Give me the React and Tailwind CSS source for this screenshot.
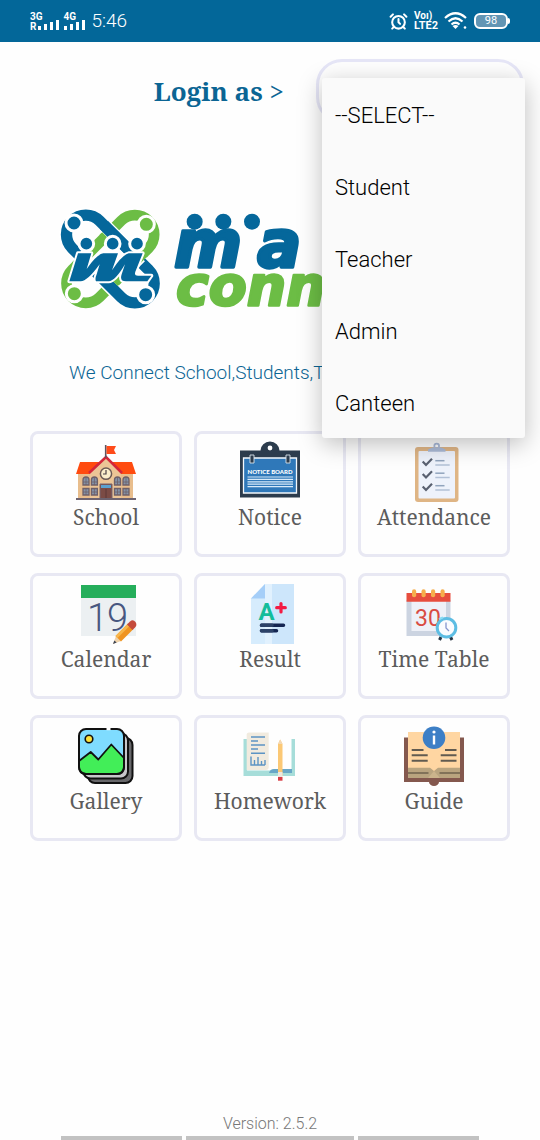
import { useState } from "react";
import { AlarmClock } from "lucide-react";

const ROLES = ["--SELECT--", "Student", "Teacher", "Admin", "Canteen"];

const SERIF = "font-['Noto_Serif','DejaVu_Serif',serif]";

function Svg({ children }) {
  return (
    <svg viewBox="0 0 60 60" className="size-[60px] overflow-visible" aria-hidden="true">
      {children}
    </svg>
  );
}

function SchoolIcon() {
  return (
    <Svg>
      <path d="M4 19H56L60 31H0Z" fill="#ff4b0f" />
      <path d="M2 31H57V55H2Z" fill="#e8bd8c" />
      <path d="M30 15L45 30V55H14V30Z" fill="#ecc596" />
      <path d="M13 30L30 14L46 30" fill="none" stroke="#d3263a" strokeWidth="2.6" />
      <path d="M29.7 2V15" stroke="#5d5560" strokeWidth="1.6" />
      <path d="M30.5 3H40L38 7L40 11H30.5Z" fill="#ff4b1a" />
      <circle cx="30" cy="30.7" r="5.6" fill="#fbeecb" stroke="#6b5a55" strokeWidth="1.5" />
      <path d="M30 27V31H27" fill="none" stroke="#4c4347" strokeWidth="1.2" />
      {[7, 15.4, 38.5, 47].map((x) => (
        <g key={x} fill="#8493a8" stroke="#6f6068" strokeWidth="1.3">
          <path d={`M${x} 42V37a3 3 0 0 1 6 0V42Z`} />
          <path d={`M${x} 45.5h6v6.500h-6Z`} />
          <path d={`M${x + 3} 34V42M${x + 3} 45.500V52M${x} 39H${x + 6}M${x} 49H${x + 6}`} strokeWidth=".8" />
        </g>
      ))}
      <path d="M24 41H36V56H24Z" fill="#7b4b45" stroke="#776570" />
      <path d="M25 42H35V45H25Z" fill="#5ba1d0" />
      <path d="M30 46V56" stroke="#553436" strokeWidth=".8" />
      <path d="M0 55H60V57H0Z" fill="#6d6370" />
    </Svg>
  );
}

function NoticeIcon() {
  return (
    <Svg>
      <path d="M0 7.500H20.500A9.500 9 0 0 1 39.500 7.500H60V54.500H0Z" fill="#2c3c4d" />
      <circle cx="30" cy="5" r="2.4" fill="#fff" />
      <path d="M3.500 15H56.500V50H3.500Z" fill="#2f78b9" stroke="#f3f8fc" strokeWidth="1.3" />
      <path d="M10 12H14V20H10ZM46 12H50V20H46Z" fill="#2c3c4d" stroke="#d9e2ea" strokeWidth=".9" />
      <text x="30" y="30.500" textAnchor="middle" fontSize="6" fontWeight="900" fill="#fff" fontFamily="Lato, sans-serif">
        NOTICE BOARD
      </text>
      <path d="M7.500 34H53M7.500 36.400H53M7.500 38.800H53M7.500 41.200H53M7.500 43.600H53" stroke="#d8eafa" strokeWidth="1.2" />
    </Svg>
  );
}

function AttendanceIcon() {
  return (
    <Svg>
      <rect x="11" y="4" width="43.500" height="55" rx="3" fill="#dfb585" />
      <rect x="14.500" y="8" width="36.500" height="47.500" rx="1" fill="#eef2fb" />
      <circle cx="32.700" cy="3" r="2.400" fill="none" stroke="#a9b9d8" strokeWidth="1.700" />
      <path d="M28 4.500H37.500L41.500 6.500V8.700H24V6.500Z" fill="#abbad6" />
      {[0, 12.5, 25].map((y) => (
        <g key={y} transform={`translate(0 ${y})`} fill="none">
          <path d="M18.700 18.500L22 22L28 15.700" stroke="#596070" strokeWidth="2.200" />
          <path d="M31.300 17.700H40.500" stroke="#91a4bd" strokeWidth="1.500" />
          <path d="M31.300 22H45.700" stroke="#b2c0d6" strokeWidth="1.500" />
        </g>
      ))}
    </Svg>
  );
}

function CalendarIcon() {
  return (
    <Svg>
      <path d="M5 13H60V51H5Z" fill="#ecf0f2" />
      <path d="M5 0H60V13H5Z" fill="#25ae5b" />
      <text y="45.500" fontSize="38" fontWeight="300" fill="#485780" fontFamily="Roboto, sans-serif">
        <tspan x="11">1</tspan>
        <tspan x="31">9</tspan>
      </text>
      <path d="M37 59L40 51L45 56Z" fill="#efd2aa" />
      <path d="M37 59L38.300 55.500L40.700 57.500Z" fill="#3c4454" />
      <path d="M39.500 51L52 38.500L57.500 44L45 56.500Z" fill="#ef9422" />
      <path d="M39.500 51L52 38.500L54 40.500L41.500 53Z" fill="#f8b64b" />
      <path d="M51 39.500L54 36.500Q57 34 59.500 37Q61.500 40 59 42.500L56.500 45Z" fill="#c44a3c" />
    </Svg>
  );
}

function ResultIcon() {
  return (
    <Svg>
      <path d="M25 -1H54V59H11V13.500Z" fill="#d6ecfd" />
      <path d="M25 -1H32V59H25Z" fill="#e1f1fe" />
      <path d="M32 -1H54V59H32Z" fill="#cde6fb" />
      <path d="M25 -1V13.500H11Z" fill="#a5cef8" />
      <text x="18.500" y="34.500" fontSize="24" fontWeight="700" fill="#13bd9b" fontFamily="Roboto, sans-serif">
        A
      </text>
      <path d="M41 18.500V27M36.700 22.700H45.300" stroke="#f31b43" strokeWidth="3.200" strokeLinecap="round" />
      <path d="M21.500 40.300H43.500M21.500 45.700H36.500" stroke="#142552" strokeWidth="3.500" strokeLinecap="round" />
      <path d="M21.500 40.300H32M21.500 45.700H32" stroke="#2c4268" strokeWidth="3.500" strokeLinecap="round" />
    </Svg>
  );
}

function TimeTableIcon() {
  return (
    <Svg>
      <path d="M2.500 15H46.500V51H2.500Z" fill="#ccd4e1" />
      <path d="M7.500 16H42V46H7.500Z" fill="#eef1f8" />
      <path d="M2.500 8H46.500V16.700H2.500Z" fill="#e74d3e" />
      {[10, 19.5, 29, 38.5].map((x) => (
        <rect key={x} x={x - 2} y="4.300" width="4.200" height="8" rx="2.100" fill="#f6ae4c" />
      ))}
      <text x="24" y="41" textAnchor="middle" fontSize="23" fill="#d94b42" fontFamily="Roboto, sans-serif">
        30
      </text>
      <path d="M37 52L35.500 55M46.500 52L48 55" stroke="#263544" strokeWidth="3" />
      <circle cx="42.500" cy="42.700" r="9.300" fill="#fafcff" stroke="#5dbde3" strokeWidth="3" />
      <path d="M42 37.500V43L45 46" fill="none" stroke="#8696ce" strokeWidth="1.300" />
      <path d="M35 34.500A9.500 9.500 0 0 1 39 32.500" fill="none" stroke="#8adcf4" strokeWidth="2" />
    </Svg>
  );
}

function GalleryIcon() {
  return (
    <Svg>
      <rect x="12" y="11" width="44.500" height="45" rx="7" fill="#68686b" stroke="#111" strokeWidth="2" />
      <rect x="7.500" y="6.500" width="44.500" height="45" rx="7" fill="#c7c7ca" stroke="#111" strokeWidth="2" />
      <rect x="3" y="2" width="45" height="45" rx="7" fill="#7fdcff" />
      <path d="M3 34L14.700 25L22.300 32.500L35.300 17.500L48 31V40Q48 47 41 47H10Q3 47 3 40Z" fill="#42ee58" stroke="#111" strokeWidth="1.800" strokeLinejoin="round" />
      <rect x="3" y="2" width="45" height="45" rx="7" fill="none" stroke="#111" strokeWidth="2" />
      <path d="M30.500 2H34.500" stroke="#fff" strokeWidth="2.400" />
      <circle cx="13" cy="12" r="3.800" fill="#ffe13a" stroke="#111" strokeWidth="1.600" />
    </Svg>
  );
}

function HomeworkIcon() {
  return (
    <Svg>
      <path d="M3.500 12H7V43.500H51.500V12H55V49H3.500Z" fill="#a6ddd9" />
      <path d="M29 46Q30 42 34 42H52V46Z" fill="#68a7c7" />
      <path d="M6.700 7Q7 5.500 9 5.500H28.700V41Q28 43 26 43H6.700Z" fill="#f1ebdf" />
      <path d="M11 10H25M11 14H18M11 18H25M11 22H18M11 26.300H25M11 29.500V38H25M14.500 38V33M18 38V30M21.500 38V34M25 38V33" fill="none" stroke="#5c94c4" strokeWidth="1.400" />
      <path d="M38 17L40.200 12.500L42.500 17V49H38Z" fill="#fbc875" />
      <path d="M38 17L40.200 12.500L42.500 17Z" fill="#f3d8b3" />
      <path d="M38 45H42.500V50H38Z" fill="#ece7df" />
      <path d="M38 50H42.500V53.700H38Z" fill="#d83f47" />
    </Svg>
  );
}

function GuideIcon() {
  return (
    <Svg>
      <path d="M0 10.500H60V55H35A5 4 0 0 1 25 55H0Z" fill="#84584e" />
      <path d="M4 5H56V51H4Z" fill="#ffd6a2" />
      <path d="M4 40.700H26L30 44L34 40.700H56V51H4Z" fill="#b9a47f" />
      <path d="M24 51L30 44L36 51Z" fill="#cbb48c" />
      <path d="M7.700 23H19.500M7.700 28.300H23.700M7.700 33.700H23.700M41 23H52.500M36.700 28.300H52.500M36.700 33.700H52.500" stroke="#615b50" strokeWidth="2" />
      <path d="M4 46H24.500M35.500 46H56" stroke="#817259" strokeWidth="2" />
      <circle cx="30" cy="10.700" r="11.300" fill="#3d7fc6" />
      <circle cx="30" cy="5" r="1.600" fill="#fff" />
      <path d="M30 8.500V17.500" stroke="#fff" strokeWidth="2.400" />
    </Svg>
  );
}

const TILES = [
  ["School", SchoolIcon],
  ["Notice", NoticeIcon],
  ["Attendance", AttendanceIcon],
  ["Calendar", CalendarIcon],
  ["Result", ResultIcon],
  ["Time Table", TimeTableIcon],
  ["Gallery", GalleryIcon],
  ["Homework", HomeworkIcon],
  ["Guide", GuideIcon],
];

const BLUE = "#05679b";
const GREEN = "#6cbd45";

/* Three people standing side by side, each reaching an arm to the next. */
const FIGURES =
  "M84 175H124L110 222Q140 178 160 175H204L186 226Q216 180 236 175H278L256 230Q252 242 264 242H304L292 259H228Q208 259 215 238L225 208Q196 258 176 259H138Q134 252 140 238L149 208Q112 259 92 259H58Z";

function Logo() {
  return (
    <svg viewBox="0 0 840 375" className="h-[125px] w-[280px]" role="img" aria-label="School logo">
      <g fill="none">
        <rect x="19" y="134" width="324" height="116" rx="58" transform="rotate(-45 181 192)" stroke={GREEN} strokeWidth="32" />
        <rect x="19" y="134" width="324" height="116" rx="58" transform="rotate(45 181 192)" stroke="#fff" strokeWidth="44" />
        <rect x="19" y="134" width="324" height="116" rx="58" transform="rotate(45 181 192)" stroke={BLUE} strokeWidth="34" />
        <path d="M94 197L160 131M204 250L270 184" stroke="#fff" strokeWidth="42" />
        <path d="M78 213L168 123M192 262L282 172" stroke={GREEN} strokeWidth="32" />
        <path d="M162 90L238 166" stroke={BLUE} strokeWidth="34" />
      </g>
      <g stroke="#fff" strokeWidth="9">
        <circle cx="72" cy="84" r="24" fill={BLUE} />
        <circle cx="289" cy="88" r="24" fill={GREEN} />
        <circle cx="73" cy="296" r="24" fill={GREEN} />
        <circle cx="287" cy="299" r="24" fill={BLUE} />
        <circle cx="109" cy="146" r="22" fill={BLUE} />
        <circle cx="188" cy="146" r="22" fill={BLUE} />
        <circle cx="261" cy="146" r="22" fill={BLUE} />
        <path d={FIGURES} fill={BLUE} strokeWidth="12" paintOrder="stroke" strokeLinejoin="round" />
      </g>
      <g fontFamily="DejaVu Sans, sans-serif" fontWeight="700" fontStyle="italic" strokeLinejoin="round">
        <text x="372" y="217" fontSize="196" fill={BLUE} stroke={BLUE} strokeWidth="10">
          <tspan x="372">m</tspan>
          <tspan x="622">a</tspan>
        </text>
        <text x="378" y="329" fontSize="166" fill={GREEN} stroke={GREEN} strokeWidth="8">
          conn
        </text>
      </g>
      <g fill={BLUE}>
        <circle cx="434" cy="80" r="24" />
        <circle cx="520" cy="80" r="24" />
        <circle cx="606" cy="80" r="24" />
      </g>
    </svg>
  );
}

function Signal({ top, prefix }) {
  return (
    <div className="flex flex-col text-[10px] leading-[9px] font-bold">
      <span>{top}</span>
      <div className="flex items-end gap-[3px]">
        {prefix && <span className="-mr-0.5">{prefix}</span>}
        <svg viewBox="0 0 22 10" className="h-2.5 w-[22px] overflow-visible" fill="#fff" aria-hidden="true">
          <path d="M1 5h3v4h-3zM7 3h3v6h-3zM13 1h3v8h-3zM19 -1h3v10h-3z" />
        </svg>
      </div>
    </div>
  );
}

function StatusBar() {
  return (
    <header className="flex h-[42px] items-center justify-between bg-[#036799] px-[30px] text-white">
      <div className="flex items-center gap-1">
        <Signal top="3G" prefix="R" />
        <Signal top="4G" />
        <span className="pl-0.5 text-[19px] leading-6 font-light">5:46</span>
      </div>
      <div className="flex items-center gap-1.5">
        <AlarmClock size={19} strokeWidth={2.6} aria-label="Alarm" />
        <div className="flex flex-col text-[10px] leading-[10px] font-bold">
          <span>Voı)</span>
          <span className="text-[11px]">LTE2</span>
        </div>
        <svg viewBox="0 0 24 18" className="h-[18px] w-6" fill="none" stroke="#fff" strokeWidth="2.200" aria-label="Wi-Fi">
          <path d="M1 6Q11.500 -3.500 22 6M4.500 9.500Q11.500 3 18.500 9.500M7.500 12.500Q11.500 9 15.500 12.500" />
          <path d="M8.500 14Q11.500 12 14.500 14L11.500 17Z" fill="#fff" stroke="none" />
          <circle cx="21" cy="15.500" r="1.300" fill="#fff" stroke="none" />
        </svg>
        <div className="flex items-center">
          <span className="flex h-4 w-[34px] items-center justify-center rounded-md border-2 border-white bg-[#6295b4] text-[11px] leading-3">
            98
          </span>
          <span className="h-1.5 w-0.5 rounded-r bg-white" />
        </div>
      </div>
    </header>
  );
}

export default function App() {
  const [role, setRole] = useState(ROLES[0]);
  const [open, setOpen] = useState(true);

  const choose = (name) => {
    setRole(name);
    setOpen(false);
  };

  return (
    <div className="flex min-h-screen flex-col bg-[#fefefe] font-[Roboto,sans-serif]">
      <StatusBar />

      <main className="flex flex-1 flex-col">
        <div className="flex items-center justify-end gap-8 pt-[17px] pr-4">
          <label htmlFor="role" className={`text-[26px] leading-8 font-bold text-[#0b6594] ${SERIF}`}>
            Login as <span className="font-normal">&gt;</span>
          </label>
          <div className="relative w-[208px]">
            <select
              id="role"
              value={role}
              onChange={(e) => setRole(e.target.value)}
              className="h-16 w-full appearance-none rounded-[26px] border-[3px] border-[#e6e6f7] bg-[#fefefe] px-4 text-[22px] font-light"
            >
              {ROLES.map((name) => (
                <option key={name}>{name}</option>
              ))}
            </select>
            {open && (
              <ul
                role="listbox"
                aria-label="Login as"
                className="absolute top-[19px] -right-px left-1.5 z-10 rounded-[3px] bg-[#fafafa] shadow-[0_6px_24px_rgba(0,0,0,0.26)]"
              >
                {ROLES.map((name) => (
                  <li key={name} role="option" aria-selected={name === role}>
                    <button
                      type="button"
                      onClick={() => choose(name)}
                      className="flex h-[72px] w-full items-center px-[13px] pt-[3px] text-left text-[22px] leading-7 font-light text-black"
                    >
                      {name}
                    </button>
                  </li>
                ))}
              </ul>
            )}
          </div>
        </div>

        <div className="mt-[72px] pl-[50px]">
          <Logo />
        </div>
        <p className="mt-[41px] pl-[69px] text-[19px] leading-6 font-light text-[#0b6594]">
          We Connect School,Students,Teachers
        </p>

        <nav className="mt-[46px] grid grid-cols-3 gap-x-3 gap-y-4 px-[30px]">
          {TILES.map(([name, Icon]) => (
            <button
              key={name}
              type="button"
              className="flex h-[126px] flex-col items-center rounded-lg border-[3px] border-[#e8e8f3] pt-[9px]"
            >
              <Icon />
              <span className={`text-[21px] leading-7 whitespace-nowrap text-[#5c5c5c] ${SERIF}`}>{name}</span>
            </button>
          ))}
        </nav>
      </main>

      <footer className="flex flex-col items-center text-[#777]">
        <p className="text-[16px] leading-6 font-light">Version: 2.5.2</p>
        <div className="flex h-1 w-full gap-1 px-[61px]" aria-hidden="true">
          <span className="flex-5 bg-[#c2c2c2]" />
          <span className="flex-7 bg-[#c2c2c2]" />
          <span className="flex-5 bg-[#c2c2c2]" />
        </div>
      </footer>
    </div>
  );
}
